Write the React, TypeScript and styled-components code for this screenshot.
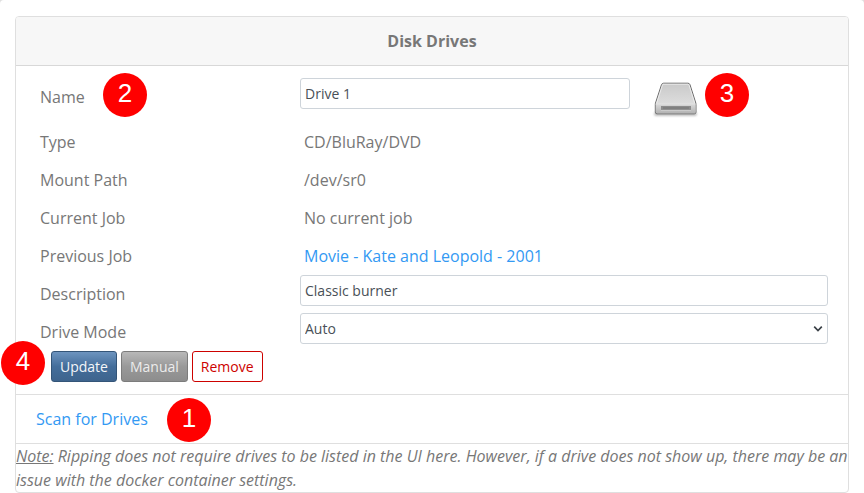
import React from "react";
import styled, { createGlobalStyle, css } from "styled-components";

const GlobalStyle = createGlobalStyle`
  *, *::before, *::after { box-sizing: border-box; }
  html { background: #dfdfdf; }
  body {
    margin: 0;
    color: #777;
    font-family: "Open Sans", "Noto Sans", sans-serif;
    font-size: 16px;
    line-height: 24px;
  }
`;

const Page = styled.main`
  padding: 16px 15px 0;
  background: #fff;
  border-radius: 4px 4px 0 0;
`;

const Card = styled.section`
  border: 1px solid #dfdfdf;
  border-radius: 4px;
  background: #fff;
`;

const CardHeader = styled.h1`
  margin: 0;
  padding: 12px 20px;
  border-bottom: 1px solid #d8d8d8;
  border-radius: 3px 3px 0 0;
  background: #f7f7f7;
  font-size: 16px;
  font-weight: 700;
  line-height: 24px;
  text-align: center;
`;

const DriveForm = styled.form`
  padding: 12px 20px;
`;

const Row = styled.div<{ $tall?: boolean }>`
  display: grid;
  grid-template-columns: 4fr 5fr 3fr;
  align-items: start;
  min-height: ${(p) => (p.$tall ? 45 : 38)}px;
`;

const labelText = css`
  position: relative;
  justify-self: start;
  padding: 7px 4px;
`;

const Label = styled.label`
  ${labelText}
`;

const Term = styled.span`
  ${labelText}
`;

const Value = styled.span`
  grid-column: 2 / -1;
  padding: 7px 4px;
`;

const Link = styled.a`
  color: #3399f3;
  text-decoration: none;
  &:hover { text-decoration: underline; }
`;

const field = css`
  width: 100%;
  height: 31px;
  margin: 0;
  padding: 4px;
  border: 1px solid #ced4da;
  border-radius: 3px;
  background: #fff;
  color: #495057;
  font-family: inherit;
  font-size: 14px;
  line-height: 21px;
`;

const TextField = styled.input<{ $wide?: boolean }>`
  ${field}
  grid-column: ${(p) => (p.$wide ? "2 / -1" : "auto")};
`;

const SelectWrap = styled.div`
  position: relative;
  display: flex;
  grid-column: 2 / -1;
`;

const SelectField = styled.select`
  ${field}
  appearance: none;
`;

const Chevron = styled.svg`
  position: absolute;
  right: 5px;
  top: 12px;
  pointer-events: none;
`;

const IconCell = styled.div`
  position: relative;
  display: flex;
  justify-self: start;
  padding-left: 22px;
`;

const Actions = styled.div`
  position: relative;
  display: flex;
  gap: 4px;
  padding-left: 15px;
`;

const tones = {
  primary: css`
    border-color: #345578;
    background: linear-gradient(#6d94bf, #446e9b 50%, #3e648d);
    color: #f4f6f9;
  `,
  muted: css`
    border-color: #7c7c7c;
    background: linear-gradient(#b8b8b8, #999 50%, #8d8d8d);
    color: #ececec;
  `,
  danger: css`
    border-color: #cd0200;
    background: #fff;
    color: #cd0200;
  `,
};

const Button = styled.button<{ $tone: keyof typeof tones }>`
  height: 31px;
  padding: 4px 8px;
  border: 1px solid;
  border-radius: 3px;
  font-family: inherit;
  font-size: 14px;
  line-height: 21px;
  ${(p) => tones[p.$tone]}
`;

const CardFooter = styled.div`
  position: relative;
  padding: 12px 20px;
  border-top: 1px solid #dfdfdf;
  border-bottom: 1px solid #dfdfdf;
`;

const Note = styled.p`
  margin: 0;
  font-style: italic;
`;

const Marker = styled.span<{ $left: number; $top: number }>`
  position: absolute;
  left: ${(p) => p.$left}px;
  top: ${(p) => p.$top}px;
  width: 44px;
  height: 44px;
  border-radius: 50%;
  background: #f00;
  color: #fff;
  font-family: "Liberation Sans", Arial, sans-serif;
  font-size: 26px;
  line-height: 40px;
  text-align: center;
`;

function DriveIcon() {
  return (
    <svg width="48" height="45" viewBox="0 0 48 45" role="img" aria-label="Optical drive">
      <defs>
        <linearGradient id="lid" x1="0" y1="0" x2="0" y2="1">
          <stop offset="0" stopColor="#c9c9c9" />
          <stop offset="1" stopColor="#e6e6e6" />
        </linearGradient>
        <linearGradient id="front" x1="0" y1="0" x2="0" y2="1">
          <stop offset="0" stopColor="#dadada" />
          <stop offset="1" stopColor="#b2b2b2" />
        </linearGradient>
        <filter id="soft" x="-10%" y="-80%" width="120%" height="260%">
          <feGaussianBlur stdDeviation="1" />
        </filter>
      </defs>
      <rect x="2" y="34" width="43" height="4" rx="2" fill="#000" opacity="0.25" filter="url(#soft)" />
      <path
        d="M11.600 5.200h24.300q1.500 0 2.100 1.500l5.800 18.300q.2.700.2 1.500v7.600q0 1.700-1.700 1.700h-37.300q-1.700 0-1.700-1.700v-7.600q0-.8.2-1.500l6-18.300q.6-1.500 2.100-1.500z"
        fill="url(#lid)"
        stroke="#6a6a6a"
      />
      <path d="M3.800 25.800h39.700v8q0 1.500-1.500 1.500h-36.700q-1.500 0-1.500-1.500z" fill="url(#front)" />
      <path
        d="M11.700 6.200h24.100q1 0 1.300 1l5.700 18.200M11.700 6.200q-1 0-1.300 1L4.500 25.400"
        fill="none"
        stroke="#f2f2f2"
        strokeWidth="0.8"
      />
      <path d="M4 26h39" stroke="#e4e4e4" strokeWidth="0.8" />
      <rect x="9" y="28" width="30" height="4" fill="#8c8c8c" />
      <path d="M11 30h26" stroke="#757575" />
      <path d="M9 32.400h30" stroke="#d0d0d0" strokeWidth="0.8" />
    </svg>
  );
}

export default function App() {
  return (
    <>
      <GlobalStyle />
      <Page>
        <Card>
          <CardHeader>Disk Drives</CardHeader>
          <DriveForm onSubmit={(e) => e.preventDefault()}>
            <Row $tall>
              <Label htmlFor="drive-name">
                Name
                <Marker $left={67} $top={-5}>2</Marker>
              </Label>
              <TextField id="drive-name" defaultValue="Drive 1" />
              <IconCell>
                <DriveIcon />
                <Marker $left={75} $top={-5}>3</Marker>
              </IconCell>
            </Row>
            <Row>
              <Term>Type</Term>
              <Value>CD/BluRay/DVD</Value>
            </Row>
            <Row>
              <Term>Mount Path</Term>
              <Value>/dev/sr0</Value>
            </Row>
            <Row>
              <Term>Current Job</Term>
              <Value>No current job</Value>
            </Row>
            <Row>
              <Term>Previous Job</Term>
              <Value>
                <Link href="#job">Movie - Kate and Leopold - 2001</Link>
              </Value>
            </Row>
            <Row>
              <Label htmlFor="drive-description">Description</Label>
              <TextField id="drive-description" $wide defaultValue="Classic burner" />
            </Row>
            <Row>
              <Label htmlFor="drive-mode">Drive Mode</Label>
              <SelectWrap>
                <SelectField id="drive-mode" defaultValue="auto">
                  <option value="auto">Auto</option>
                  <option value="manual">Manual</option>
                </SelectField>
                <Chevron width="10" height="8" viewBox="0 0 10 8" aria-hidden="true">
                  <path d="M1.200 1.700 5 5.500 8.800 1.700" fill="none" stroke="#3a4046" strokeWidth="1.700" />
                </Chevron>
              </SelectWrap>
            </Row>
            <Actions>
              <Marker $left={-35} $top={-10}>4</Marker>
              <Button type="submit" $tone="primary">Update</Button>
              <Button type="button" $tone="muted">Manual</Button>
              <Button type="button" $tone="danger">Remove</Button>
            </Actions>
          </DriveForm>
          <CardFooter>
            <Link href="#scan">Scan for Drives</Link>
            <Marker $left={151} $top={3}>1</Marker>
          </CardFooter>
          <Note>
            <u>Note:</u> Ripping does not require drives to be listed in the UI here. However, if a
            drive does not show up, there may be an issue with the docker container settings.
          </Note>
        </Card>
      </Page>
    </>
  );
}
